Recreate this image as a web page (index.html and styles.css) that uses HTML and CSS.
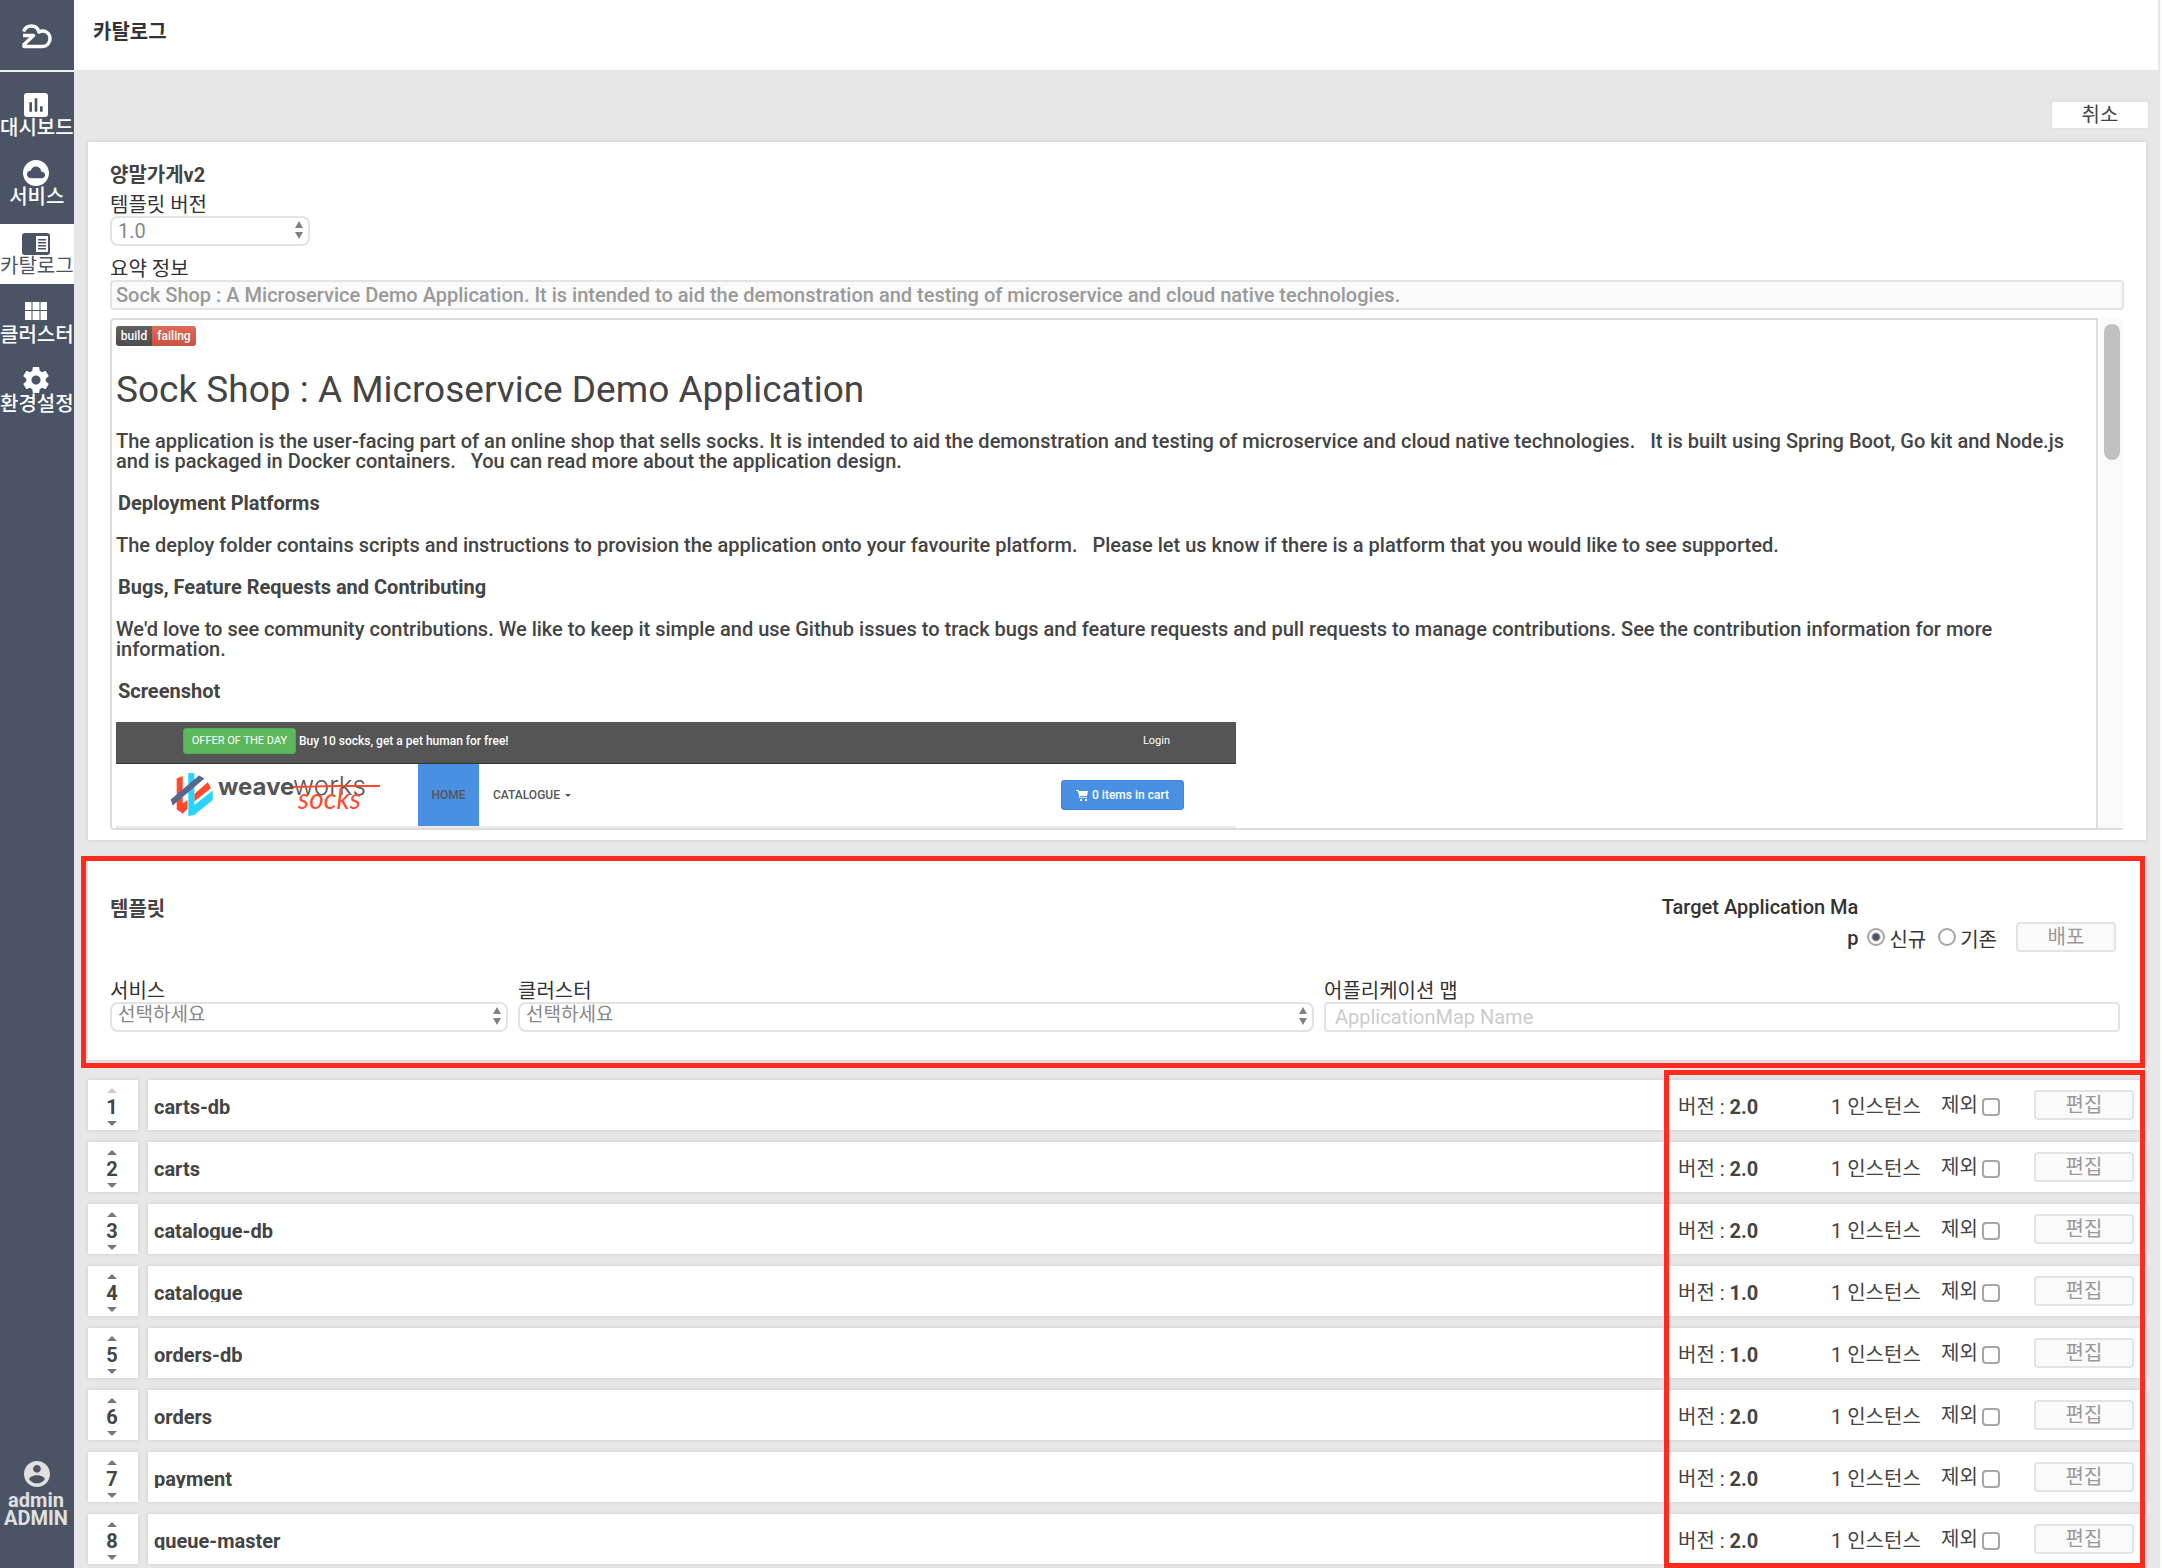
FILE: index.html
```html
<!DOCTYPE html>
<html lang="ko">
<head>
<meta charset="utf-8">
<meta name="viewport" content="width=device-width, initial-scale=1">
<title>카탈로그</title>
<link rel="stylesheet" href="styles.css">
</head>
<body>
<svg class="defs" aria-hidden="true">
  <symbol id="sort" viewBox="0 0 10 20"><path d="M5 1L9 8H1zM5 19L1 12H9z"/></symbol>
  <symbol id="up" viewBox="0 0 10 5"><path d="M5 0L10 5H0z"/></symbol>
  <symbol id="down" viewBox="0 0 10 5"><path d="M5 5L0 0H10z"/></symbol>
</svg>
<div class="app">
  <nav class="sidebar">
    <a class="brand" href="#" aria-label="홈">
      <svg width="30" height="25" viewBox="0 0 30 25" fill="none" stroke="currentColor" stroke-width="3.400" stroke-linejoin="round"><path d="M1.500 7.500C3 4 6 2 9.500 2C13.500 2 16 4.500 17 8C22.500 5 28 9 28 14.500C28 19.500 24.500 22.500 20.500 22.500H2V20.500L11.500 11.500H1"/></svg>
    </a>
    <ul class="menu">
      <li><a href="#"><svg width="24" height="24" viewBox="3 3 18 18"><path d="M19 3H5c-1.100 0-2 .9-2 2v14c0 1.100.9 2 2 2h14c1.100 0 2-.9 2-2V5c0-1.100-.9-2-2-2zM9 17H7v-7h2v7zm4 0h-2V7h2v10zm4 0h-2v-4h2v4z"/></svg>대시보드</a></li>
      <li><a href="#"><svg width="26" height="26" viewBox="2 2 20 20"><path d="M12 2C6.480 2 2 6.480 2 12s4.480 10 10 10 10-4.480 10-10S17.520 2 12 2zm4.500 14H8c-1.660 0-3-1.340-3-3s1.340-3 3-3l.14.010C8.580 8.280 10.130 7 12 7c2.210 0 4 1.790 4 4h.5c1.380 0 2.500 1.120 2.500 2.500S17.880 16 16.500 16z"/></svg>서비스</a></li>
      <li><a class="active" href="#"><svg width="28" height="22" viewBox="0 0 28 22"><path fill-rule="evenodd" d="M3 0H25Q28 0 28 3V19Q28 22 25 22H3Q0 22 0 19V3Q0 0 3 0zM14 3V19H26V3zM16 6H24V7.500H16zM16 9H24V10.500H16zM16 12H24V13.500H16zM16 15H24V16.500H16z"/></svg>카탈로그</a></li>
      <li><a href="#"><svg width="22" height="22" viewBox="0 0 22 22"><path d="M0 0h6.500v8H0zM7.500 0h7v8h-7zM15.500 0h6.500v8h-6.500zM0 9h6.500v9H0zM7.500 9h7v9h-7zM15.500 9h6.500v9h-6.500z"/></svg>클러스터</a></li>
      <li><a href="#"><svg width="26" height="26" viewBox="2 2 20 20"><path d="M19.430 12.980c.04-.32.070-.64.070-.98s-.03-.66-.07-.98l2.110-1.650c.19-.15.240-.42.120-.64l-2-3.460c-.12-.22-.39-.3-.61-.22l-2.490 1c-.52-.4-1.080-.73-1.690-.98l-.38-2.650C14.460 2.180 14.250 2 14 2h-4c-.25 0-.46.180-.49.420l-.38 2.650c-.61.250-1.170.59-1.690.98l-2.490-1c-.23-.09-.49 0-.61.220l-2 3.460c-.13.220-.07.490.12.640l2.110 1.650c-.04.320-.07.650-.07.980s.03.660.07.980l-2.110 1.650c-.19.150-.24.420-.12.640l2 3.460c.12.220.39.300.61.220l2.490-1c.52.400 1.080.730 1.690.980l.38 2.650c.03.240.24.420.49.420h4c.25 0 .46-.18.490-.42l.38-2.650c.61-.25 1.170-.59 1.690-.98l2.490 1c.23.090.49 0 .61-.22l2-3.460c.12-.22.070-.49-.12-.64l-2.110-1.650zM12 15.500c-1.930 0-3.500-1.570-3.500-3.500s1.570-3.500 3.500-3.500 3.500 1.570 3.500 3.500-1.570 3.500-3.500 3.500z"/></svg>환경설정</a></li>
    </ul>
    <a class="user" href="#">
      <svg width="26" height="26" viewBox="2 2 20 20"><path d="M12 2C6.480 2 2 6.480 2 12s4.480 10 10 10 10-4.480 10-10S17.520 2 12 2zm0 3c1.660 0 3 1.340 3 3s-1.340 3-3 3-3-1.340-3-3 1.340-3 3-3zm0 14.200c-2.500 0-4.710-1.280-6-3.220.030-1.990 4-3.080 6-3.080 1.990 0 5.970 1.090 6 3.080-1.290 1.940-3.500 3.220-6 3.220z"/></svg>
      <span>admin</span>
      <span>ADMIN</span>
    </a>
  </nav>

  <div class="page">
    <header class="topbar"><h1>카탈로그</h1></header>
    <main class="content">
      <div class="toolbar"><button class="btn cancel" type="button">취소</button></div>

      <section class="card info">
        <h2>양말가게v2</h2>
        <div class="field version">
          <label for="version">템플릿 버전</label>
          <span class="select"><select id="version"><option>1.0</option></select><svg><use href="#sort"/></svg></span>
        </div>
        <div class="field">
          <label for="summary">요약 정보</label>
          <input class="input readonly" id="summary" readonly value="Sock Shop : A Microservice Demo Application. It is intended to aid the demonstration and testing of microservice and cloud native technologies.">
        </div>
        <div class="viewer">
          <article class="readme">
            <div class="badge"><span>build</span><span>failing</span></div>
            <h3>Sock Shop : A Microservice Demo Application</h3>
            <p>The application is the user-facing part of an online shop that sells socks. It is intended to aid the demonstration and testing of microservice and cloud native technologies. &nbsp; It is built using Spring Boot, Go kit and Node.js and is packaged in Docker containers. &nbsp; You can read more about the application design.</p>
            <h4>Deployment Platforms</h4>
            <p>The deploy folder contains scripts and instructions to provision the application onto your favourite platform. &nbsp; Please let us know if there is a platform that you would like to see supported.</p>
            <h4>Bugs, Feature Requests and Contributing</h4>
            <p>We'd love to see community contributions. We like to keep it simple and use Github issues to track bugs and feature requests and pull requests to manage contributions. See the contribution information for more information.</p>
            <h4>Screenshot</h4>
            <div class="shop">
              <div class="shop-top">
                <span class="offer">OFFER OF THE DAY</span>
                <span class="deal">Buy 10 socks, get a pet human for free!</span>
                <span class="login">Login</span>
              </div>
              <div class="shop-nav">
                <svg class="weave" width="214" height="62" viewBox="0 0 214 62">
                  <path fill="#ff4b2b" d="M8.700 14.500L14.700 12V39.500L19.500 36V45L14.700 49.500L8.700 45.500zM26.300 30L39.700 18.300L43 24L26.300 37.500z"/>
                  <path fill="#28d3ff" d="M20.300 9H26.300V41L44.700 26.500V36L26.300 51L20.300 52z"/>
                  <path fill="#56688f" d="M2.700 35.500L31 11.500L36.500 14.500L4.700 41.500z"/>
                  <text class="w1" x="50" y="31">weave</text>
                  <text class="w2" x="125" y="31">works</text>
                  <path fill="none" stroke="#ff4b2b" stroke-width="2" d="M125 23L168 22L212 22"/>
                  <text class="w3" x="130" y="45">socks</text>
                </svg>
                <span class="home">HOME</span>
                <span class="catalogue">CATALOGUE <svg width="6" height="3" viewBox="0 0 6 3"><path d="M0 0H6L3 3z"/></svg></span>
                <span class="cart"><svg width="12" height="11" viewBox="0 0 12 11"><path d="M0 0H2.500L3 1H12L11 6H4L4.300 7.200H11V8H3.500L2 1H0zM4 9h2v2H4zM9 9h2v2H9z"/></svg>0 items in cart</span>
              </div>
            </div>
          </article>
          <div class="scrollbar"><div class="thumb"></div></div>
        </div>
      </section>

      <section class="card template">
        <div class="template-head">
          <h2>템플릿</h2>
          <span class="target">Target Application Map</span>
          <div class="radios">
            <label><input type="radio" name="target" checked><span>신규</span></label>
            <label><input type="radio" name="target"><span>기존</span></label>
          </div>
          <button class="btn" type="button" disabled>배포</button>
        </div>
        <div class="fields">
          <div class="field">
            <label for="service">서비스</label>
            <span class="select"><select class="raised" id="service"><option>선택하세요</option></select><svg><use href="#sort"/></svg></span>
          </div>
          <div class="field">
            <label for="cluster">클러스터</label>
            <span class="select"><select class="raised" id="cluster"><option>선택하세요</option></select><svg><use href="#sort"/></svg></span>
          </div>
          <div class="field">
            <label for="appmap">어플리케이션 맵</label>
            <input class="input" id="appmap" placeholder="ApplicationMap Name">
          </div>
        </div>
        <div class="mark mark-template"></div>
      </section>

      <div class="list">
        <ol>
          <li><div class="order"><button type="button" aria-label="위로" disabled><svg><use href="#up"/></svg></button><b>1</b><button type="button" aria-label="아래로"><svg><use href="#down"/></svg></button></div><div class="item"><strong class="name">carts-db</strong><span class="ver">버전 : <b>2.0</b></span><span class="inst">1 인스턴스</span><label class="except">제외<input type="checkbox"></label><button class="btn" type="button" disabled>편집</button></div></li>
          <li><div class="order"><button type="button" aria-label="위로"><svg><use href="#up"/></svg></button><b>2</b><button type="button" aria-label="아래로"><svg><use href="#down"/></svg></button></div><div class="item"><strong class="name">carts</strong><span class="ver">버전 : <b>2.0</b></span><span class="inst">1 인스턴스</span><label class="except">제외<input type="checkbox"></label><button class="btn" type="button" disabled>편집</button></div></li>
          <li><div class="order"><button type="button" aria-label="위로"><svg><use href="#up"/></svg></button><b>3</b><button type="button" aria-label="아래로"><svg><use href="#down"/></svg></button></div><div class="item"><strong class="name">catalogue-db</strong><span class="ver">버전 : <b>2.0</b></span><span class="inst">1 인스턴스</span><label class="except">제외<input type="checkbox"></label><button class="btn" type="button" disabled>편집</button></div></li>
          <li><div class="order"><button type="button" aria-label="위로"><svg><use href="#up"/></svg></button><b>4</b><button type="button" aria-label="아래로"><svg><use href="#down"/></svg></button></div><div class="item"><strong class="name">catalogue</strong><span class="ver">버전 : <b>1.0</b></span><span class="inst">1 인스턴스</span><label class="except">제외<input type="checkbox"></label><button class="btn" type="button" disabled>편집</button></div></li>
          <li><div class="order"><button type="button" aria-label="위로"><svg><use href="#up"/></svg></button><b>5</b><button type="button" aria-label="아래로"><svg><use href="#down"/></svg></button></div><div class="item"><strong class="name">orders-db</strong><span class="ver">버전 : <b>1.0</b></span><span class="inst">1 인스턴스</span><label class="except">제외<input type="checkbox"></label><button class="btn" type="button" disabled>편집</button></div></li>
          <li><div class="order"><button type="button" aria-label="위로"><svg><use href="#up"/></svg></button><b>6</b><button type="button" aria-label="아래로"><svg><use href="#down"/></svg></button></div><div class="item"><strong class="name">orders</strong><span class="ver">버전 : <b>2.0</b></span><span class="inst">1 인스턴스</span><label class="except">제외<input type="checkbox"></label><button class="btn" type="button" disabled>편집</button></div></li>
          <li><div class="order"><button type="button" aria-label="위로"><svg><use href="#up"/></svg></button><b>7</b><button type="button" aria-label="아래로"><svg><use href="#down"/></svg></button></div><div class="item"><strong class="name">payment</strong><span class="ver">버전 : <b>2.0</b></span><span class="inst">1 인스턴스</span><label class="except">제외<input type="checkbox"></label><button class="btn" type="button" disabled>편집</button></div></li>
          <li><div class="order"><button type="button" aria-label="위로"><svg><use href="#up"/></svg></button><b>8</b><button type="button" aria-label="아래로"><svg><use href="#down"/></svg></button></div><div class="item"><strong class="name">queue-master</strong><span class="ver">버전 : <b>2.0</b></span><span class="inst">1 인스턴스</span><label class="except">제외<input type="checkbox"></label><button class="btn" type="button" disabled>편집</button></div></li>
        </ol>
        <div class="mark mark-list"></div>
      </div>
    </main>
  </div>
</div>
</body>
</html>
```
FILE: styles.css
```css
*, *::before, *::after { box-sizing: border-box; }
body, h1, h2, h3, h4, p, ul, ol { margin: 0; padding: 0; }
ul, ol { list-style: none; }
svg { display: block; fill: currentColor; }

body {
  background: #e7e7e7;
  color: #444;
  font: 400 20px/22px Roboto, "Noto Sans CJK KR", sans-serif;
}
button, input, select { font: inherit; color: inherit; margin: 0; }
a { color: inherit; text-decoration: none; }
.defs { position: absolute; width: 0; height: 0; }

.app { display: flex; min-height: 100vh; border-right: 2px solid #fafafa; }

/* Sidebar */
.sidebar {
  display: flex;
  flex-direction: column;
  flex: none;
  width: 74px;
  background: #4a5464;
  color: #fff;
  font-weight: 500;
}
.brand {
  display: flex;
  align-items: center;
  justify-content: center;
  height: 72px;
  padding-top: 2px;
  border-bottom: 2px solid #f0f0f0;
}
.brand svg { fill: none; }
.menu { display: grid; gap: 9px; padding-top: 14px; }
.menu a {
  display: flex;
  flex-direction: column;
  align-items: center;
  justify-content: flex-end;
  height: 60px;
  margin-right: 2px;
  padding-bottom: 7px;
  white-space: nowrap;
}
.menu .active { background: #fff; color: #4a5464; font-weight: 400; }
.menu svg { margin-right: 2px; }
.user {
  display: flex;
  flex-direction: column;
  align-items: center;
  margin: auto 2px 0 0;
  padding-bottom: 41px;
  color: #e0e0e0;
  font-weight: 700;
  line-height: 18px;
}
.user svg { margin: 0 0 4px 2px; }

/* Page */
.page { flex: 1; min-width: 0; }
.topbar { height: 70px; margin-right: 2px; padding: 21px 19px; background: #fff; color: #333; }
.topbar h1, h2 { font-size: 20px; font-weight: 700; }
.content { padding: 30px 14px 4px; }
.toolbar { display: flex; justify-content: flex-end; margin: 0 -4px 12px 0; }
.card { background: #fff; box-shadow: 0 0 4px rgba(0, 0, 0, .12); }

.btn {
  flex: none;
  width: 100px;
  height: 30px;
  padding: 0;
  border: 2px solid #e3e3e3;
  border-radius: 4px;
  background: #fafafa;
  color: #999;
  line-height: 22px;
}
.cancel { background: #fff; color: #444; }

/* Form controls */
.field { display: flex; flex-direction: column; color: #333; }
.select { position: relative; display: block; }
.select select, .input {
  display: block;
  width: 100%;
  height: 30px;
  padding: 0 6px;
  border: 2px solid #e3e3e3;
  border-radius: 8px;
  outline: 0;
  background: #fff;
  color: #888;
  appearance: none;
}
.select .raised { padding-bottom: 4px; font-size: 19px; }
.select svg { position: absolute; top: 4px; right: 6px; width: 10px; height: 20px; color: #808080; pointer-events: none; }
.input { padding: 0 9px; border-radius: 4px; }
.input::placeholder { color: #ccc; opacity: 1; }
.input.readonly { padding: 0 4px; background: #fafafa; color: #999; font-weight: 500; }

/* Catalogue details */
.info { padding: 22px 22px 10px; }
.info h2 { margin-bottom: 8px; }
.version { width: 200px; margin-bottom: 12px; }
.viewer { display: flex; margin-top: 8px; border-radius: 4px; overflow: hidden; }
.readme { flex: 1; min-width: 0; padding: 6px 4px 0; border: 2px solid #ddd; border-radius: 4px 0 0 4px; line-height: 20px; }
.scrollbar { width: 26px; padding: 6px; border-bottom: 2px solid #ddd; background: #fafafa; }
.thumb { width: 16px; height: 136px; border-radius: 8px; background: #c1c1c1; }
.badge { display: flex; width: 80px; border-radius: 3px; overflow: hidden; color: #fff; font-size: 12px; font-weight: 500; text-align: center; }
.badge span { flex: 44; background: linear-gradient(#606060, #4d4d4d); }
.badge span:first-child { flex: 36; }
.badge span:last-child { background: linear-gradient(#de6b57, #c95240); }
.readme h3 { margin: 21px 0 19px; font-size: 37px; font-weight: 400; line-height: 45px; }
.readme p { margin-bottom: 22px; font-weight: 500; }
.readme h4 { margin: 0 2px 22px; font-size: 20px; font-weight: 700; }
.readme h4:last-of-type { margin-bottom: 21px; }

/* Shop preview */
.shop { width: 1120px; max-width: 100%; border-bottom: 2px solid #eaeaea; font-size: 12px; }
.shop-top { display: flex; align-items: center; gap: 3px; height: 42px; padding: 0 66px 4px 67px; border-bottom: 1px solid #333; background: #555; color: #fff; }
.offer { width: 113px; border: 1px solid #4cae4c; border-radius: 3px; background: #5cb85c; font-size: 11px; line-height: 24px; text-align: center; }
.deal { font-weight: 500; }
.login { margin-left: auto; font-size: 11px; }
.shop-nav { display: flex; align-items: center; padding: 0 52px; color: #555; font-weight: 500; }
.weave { margin-right: 36px; }
.w1, .w2 { font: 700 24px Inter, sans-serif; fill: #555; }
.w2 { font-size: 26px; font-weight: 300; }
.w3 { font: italic 400 28px Lato, sans-serif; fill: #ff4b2b; }
.home { width: 61px; background: #4a90e2; line-height: 62px; text-align: center; }
.catalogue { display: flex; align-items: center; gap: 5px; margin-left: 14px; }
.cart { display: flex; align-items: center; justify-content: center; gap: 4px; width: 123px; height: 30px; margin-left: auto; border: 1px solid #3a87df; border-radius: 3px; background: #4a90e2; color: #fff; }

/* Template form */
.template { position: relative; margin-top: 18px; padding: 34px 26px 28px 22px; }
.template-head { display: flex; align-items: flex-end; margin-bottom: 26px; padding-right: 4px; }
.template-head h2 { align-self: flex-start; line-height: 34px; }
.target { width: 204px; margin-left: auto; color: #333; font-weight: 500; line-height: 31px; text-align: right; word-break: break-all; }
.radios { display: flex; gap: 12px; margin: 0 19px 2px 9px; color: #333; }
.radios label { display: flex; align-items: center; gap: 4px; height: 30px; }
.radios span { padding-top: 6px; }
.radios input, .except input { flex: none; width: 18px; height: 18px; border: 2px solid #a6a6a6; border-radius: 50%; background: #fff; appearance: none; }
.radios input:checked { background: radial-gradient(circle, #4a5464 3px, #fff 5px); }
.template-head .btn { margin-bottom: 2px; }
.fields { display: grid; grid-template-columns: 1fr 2fr 2fr; gap: 10px; }

/* Template list */
.list { position: relative; margin-top: 20px; }
.list ol { display: grid; gap: 12px; }
.list li { display: grid; grid-template-columns: 50px 1fr; gap: 10px; }
.order, .item { height: 50px; background: #fff; box-shadow: 0 0 4px rgba(0, 0, 0, .12); }
.order { display: flex; flex-direction: column; align-items: center; gap: 3px; padding: 8px 2px 0 0; }
.order b, .ver b, .name { font-weight: 700; }
.order button { padding: 0; border: 0; background: none; color: #6f7780; }
.order button:disabled { color: #ccc; }
.order svg { width: 10px; height: 5px; }
.item { display: flex; align-items: center; padding: 0 12px 0 6px; }
.name { flex: 1; padding-top: 4px; line-height: 18px; overflow: hidden; }
.ver { width: 153px; padding-top: 4px; }
.inst { width: 110px; padding-top: 4px; }
.except { display: flex; align-items: center; gap: 4px; width: 93px; }
.except input { margin-top: 4px; border-radius: 4px; }

/* Highlight frames */
.mark { position: absolute; border: 5px solid #ff2b1c; pointer-events: none; }
.mark-template { inset: -2px 1px -8px -7px; }
.mark-list { top: -10px; right: 1px; bottom: -4px; width: 481px; }
```
